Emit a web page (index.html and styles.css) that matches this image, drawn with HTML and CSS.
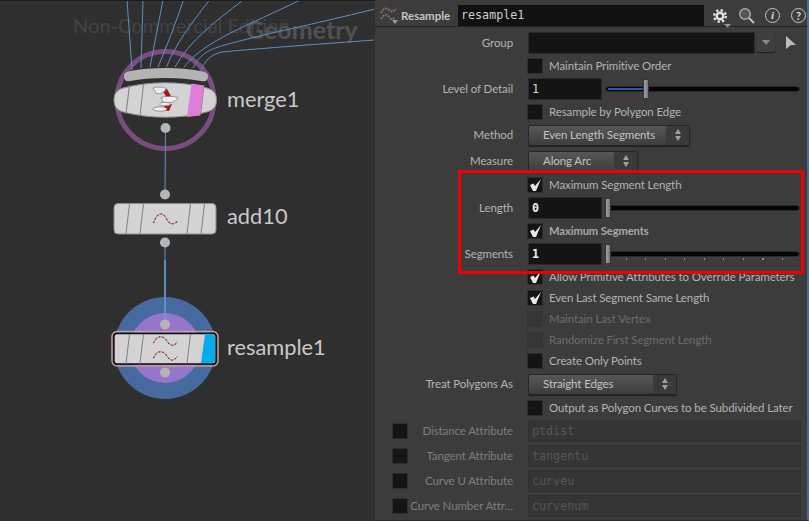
FILE: index.html
```html
<!DOCTYPE html>
<html>
<head>
    <title>Resample</title>
    <link rel="stylesheet" href="styles.css">
</head>
<body>
    <div class="network">
        <svg class="canvas" width="374" height="521" viewBox="0 0 374 521">
            <text class="watermark" x="73" y="33">Non-Commercial Edition</text>
            <text class="context" x="246" y="39">Geometry</text>

            <circle class="merge-ring" cx="165.5" cy="100" r="48.5"/>
            <g class="wire">
                <path d="M127 0 L132 70"/>
                <path d="M143 0 L141 68"/>
                <path d="M163 0 L150 67"/>
                <path d="M183.5 0 C175 25 166 48 158 67"/>
                <path d="M209.5 0 C190 25 175 45 166.500 67"/>
                <path d="M243 0 C215 22 190 40 175 67"/>
                <path d="M300 0 C250 25 205 40 184 67"/>
                <path d="M375 9 C310 25 260 35 225 45 C205 50 198 58 193 68"/>
                <path d="M375 40 C320 44 265 48 222 52 C212 54 205 60 201 70"/>
                <path d="M165.500 128 L165 194"/>
                <path d="M165 243 L165 300"/>
            </g>
            <path class="merge-input" d="M124 76 C124 73 126 72 130 71 C150 67 180 67 201 71 C205 72 208 73 208 76 C208 80 206 82 201 81 C180 77 150 77 130 81 C126 82 124 80 124 76 Z"/>
            <path class="node" d="M114 100 C114 93 117 90 123 88 C150 81 181 81 207 88 C213 90 216.500 93 216.500 100 C216.500 107 213 110 207 112 C181 119 150 119 123 112 C117 110 114 107 114 100 Z"/>
            <path class="slash" d="M129.500 85 L126 114 M143.500 84 L140 116 M204 85 L200.500 115"/>
            <path class="flag-pink" d="M191.500 83.500 L204 85.500 L200 115.500 L187 117 Z"/>
            <g class="cups">
                <path class="arrow" d="M162 90 L167 89 L171 96 L167 98 Z"/>
                <path class="arrow" d="M166 104 L172 104 L169 111 L162 110 Z"/>
                <path class="cup" d="M153 88 C156 86.500 164 87 166 88.500 C165 93 158 95 156 93 Z"/>
                <path class="cup" d="M161 97.500 C165 96 174 96 178 97.500 C176 103 166 104 163 102 Z"/>
                <ellipse class="cup" cx="160" cy="109" rx="7" ry="2.200"/>
                <ellipse class="cup" cx="165" cy="104" rx="5.500" ry="1.800"/>
            </g>
            <circle class="dot" cx="165.500" cy="128" r="5"/>
            <circle class="dot" cx="165" cy="194.500" r="5"/>

            <rect class="node" x="114" y="203.500" width="102" height="30.500" rx="4"/>
            <path class="slash" d="M129.500 204 L126 233.500 M143.500 204 L140 233.500 M190.500 204 L187 233.500 M204.500 204 L201 233.500"/>
            <path class="curve" d="M153.500 223 C157 212 163 212 166 218 C169 224 173 226 177.500 221"/>
            <path class="curve-dots" d="M153.500 223 C157 212 163 212 166 218 C169 224 173 226 177.500 221"/>
            <circle class="dot" cx="165" cy="242.500" r="5"/>

            <circle class="bypass-ring" cx="165" cy="348" r="51"/>
            <circle class="template-ring" cx="165" cy="348" r="35"/>
            <path class="wire-over" d="M165 260 L165 320"/>
            <circle class="dot" cx="165" cy="324.500" r="5"/>
            <circle class="dot" cx="165" cy="372.500" r="5"/>
            <rect class="node-halo" x="112" y="331.500" width="106" height="34.500" rx="5"/>
            <rect class="node-picked" x="114" y="333.500" width="102" height="30.500" rx="3"/>
            <path class="flag-blue" d="M205 334.500 L213 334.500 Q215 334.500 215 337 L215 361 Q215 363 213 363 L201 363 Z"/>
            <path class="slash" d="M129.500 334 L126 363.500 M143.500 334 L140 363.500 M190.500 334 L187 363.500"/>
            <path class="curve" d="M153.500 343 C157 335 163 335 167 341 C170 346 174 347 177.500 342"/>
            <path class="curve-dots" d="M153.500 343 C157 335 163 335 167 341 C170 346 174 347 177.500 342"/>
            <path class="curve" d="M153.500 358 C157 350 163 350 167 356 C170 361 174 362 177.500 356"/>
            <path class="curve-dots" d="M153.500 358 C157 350 163 350 167 356 C170 361 174 362 177.500 356"/>

            <text class="node-name" x="227" y="107">merge1</text>
            <text class="node-name" x="227" y="224">add10</text>
            <text class="node-name" x="227" y="355">resample1</text>
        </svg>
    </div>

    <div class="panel">
        <div class="header">
            <svg class="type-icon" width="18" height="18" viewBox="0 0 18 18">
                <path class="curve-thick" d="M1 7 C4 1 7 2 9 4 C11 6 13 6 16 3"/>
                <path class="curve-thick" d="M1 13 C4 8 7 8 9 11 C11 14 13 14 15 11"/>
                <path class="tiny-arrow" d="M12 14 L18 14 L15 18 Z"/>
            </svg>
            <span class="type-name">Resample</span>
            <div class="name-field">resample1</div>
            <div class="tools">
                <svg class="tool-gear" width="20" height="20" viewBox="0 0 20 20">
                    <circle class="gear-teeth" cx="8" cy="8" r="5.800"/>
                    <circle class="gear-body" cx="8" cy="8" r="3.300"/>
                    <path class="tiny-arrow" d="M12 16 L19 16 L15.500 19.500 Z"/>
                </svg>
                <svg class="tool-lens" width="17" height="17" viewBox="0 0 17 17">
                    <circle class="lens-glass" cx="7" cy="7" r="5.300"/>
                    <path class="lens-handle" d="M11 11 L16 16"/>
                </svg>
                <div class="tool-round tool-info">i</div>
                <div class="tool-round tool-help">?</div>
            </div>
        </div>

        <div class="params">
            <div class="row first">
                <div class="label">Group</div>
                <div class="field group-field"></div>
                <div class="drop-btn"><span class="drop-arrow"></span></div>
                <svg class="pick-arrow" width="12" height="15" viewBox="0 0 12 15"><path d="M1 1 L11 10 L6 10 L1 14 Z"/></svg>
            </div>
            <div class="row">
                <div class="label"></div>
                <div class="check"></div>
                <span class="check-text">Maintain Primitive Order</span>
            </div>
            <div class="row">
                <div class="label">Level of Detail</div>
                <div class="field num">1</div>
                <div class="slider">
                    <div class="slider-fill"></div>
                    <div class="slider-handle lod"></div>
                </div>
            </div>
            <div class="row">
                <div class="label"></div>
                <div class="check"></div>
                <span class="check-text">Resample by Polygon Edge</span>
            </div>
            <div class="row">
                <div class="label">Method</div>
                <div class="menu method"><span>Even Length Segments</span><div class="spin"><i class="up"></i><i class="down"></i></div></div>
            </div>
            <div class="row gap-6">
                <div class="label">Measure</div>
                <div class="menu measure"><span>Along Arc</span><div class="spin"><i class="up"></i><i class="down"></i></div></div>
            </div>
            <div class="row gap-4">
                <div class="label"></div>
                <div class="check"><svg width="14" height="14" viewBox="0 0 14 14"><path class="tick" d="M2 7 L5.500 5.500 L7 8 L13 1 L8 13 L5 13 Z"/></svg></div>
                <span class="check-text">Maximum Segment Length</span>
            </div>
            <div class="row">
                <div class="label">Length</div>
                <div class="field num strong">0</div>
                <div class="slider">
                    <div class="slider-handle"></div>
                </div>
            </div>
            <div class="row">
                <div class="label"></div>
                <div class="check"><svg width="14" height="14" viewBox="0 0 14 14"><path class="tick" d="M2 7 L5.500 5.500 L7 8 L13 1 L8 13 L5 13 Z"/></svg></div>
                <span class="check-text changed">Maximum Segments</span>
            </div>
            <div class="row">
                <div class="label">Segments</div>
                <div class="field num strong">1</div>
                <div class="slider ticks">
                    <div class="slider-handle"></div>
                </div>
            </div>
            <div class="row">
                <div class="label"></div>
                <div class="check"><svg width="14" height="14" viewBox="0 0 14 14"><path class="tick" d="M2 7 L5.500 5.500 L7 8 L13 1 L8 13 L5 13 Z"/></svg></div>
                <span class="check-text">Allow Primitive Attributes to Override Parameters</span>
            </div>
            <div class="row gap-1">
                <div class="label"></div>
                <div class="check"><svg width="14" height="14" viewBox="0 0 14 14"><path class="tick" d="M2 7 L5.500 5.500 L7 8 L13 1 L8 13 L5 13 Z"/></svg></div>
                <span class="check-text">Even Last Segment Same Length</span>
            </div>
            <div class="row gap-1">
                <div class="label"></div>
                <div class="check off"></div>
                <span class="check-text dim">Maintain Last Vertex</span>
            </div>
            <div class="row gap-1">
                <div class="label"></div>
                <div class="check off"></div>
                <span class="check-text dim">Randomize First Segment Length</span>
            </div>
            <div class="row gap-1">
                <div class="label"></div>
                <div class="check"></div>
                <span class="check-text">Create Only Points</span>
            </div>
            <div class="row">
                <div class="label">Treat Polygons As</div>
                <div class="menu treat"><span>Straight Edges</span><div class="spin"><i class="up"></i><i class="down"></i></div></div>
            </div>
            <div class="row gap-4">
                <div class="label"></div>
                <div class="check"></div>
                <span class="check-text">Output as Polygon Curves to be Subdivided Later</span>
            </div>
            <div class="row">
                <div class="label dim"><div class="check"></div>Distance Attribute</div>
                <div class="field attr">ptdist</div>
            </div>
            <div class="row gap-5">
                <div class="label dim"><div class="check"></div>Tangent Attribute</div>
                <div class="field attr">tangentu</div>
            </div>
            <div class="row gap-5">
                <div class="label dim"><div class="check"></div>Curve U Attribute</div>
                <div class="field attr">curveu</div>
            </div>
            <div class="row gap-5">
                <div class="label dim"><div class="check"></div>Curve Number Attr…</div>
                <div class="field attr">curvenum</div>
            </div>
        </div>

        <div class="highlight"></div>
    </div>
</body>
</html>
```

FILE: styles.css
```css
html, body {
    margin: 0;
    padding: 0;
    height: 100%;
    overflow: hidden;
}

body {
    display: flex;
    width: 809px;
    height: 521px;
    background-color: #2f2f2f;
    font-family: Lato, Arial, sans-serif;
    font-size: 11.500px;
    letter-spacing: -0.1px;
    color: #b4b4b4;
}

/* network editor */
.network {
    width: 375px;
    flex-shrink: 0;
    border-top: 1px solid #1c1c1c;
    box-sizing: border-box;
    overflow: hidden;
}

.canvas {
    display: block;
    margin-top: -1px;
}

.watermark {
    font-size: 20.100px;
    letter-spacing: 0;
    fill: #434343;
}

.context {
    font-size: 25px;
    font-weight: 700;
    letter-spacing: 0;
    fill: #515151;
}

.node-name {
    font-size: 21.800px;
    letter-spacing: 0;
    fill: #c9c9c9;
}

.wire path {
    fill: none;
    stroke: #5d8fc8;
    stroke-width: 1;
}

.wire-over {
    fill: none;
    stroke: #6c98d2;
    stroke-width: 1.500;
}

.merge-ring {
    fill: none;
    stroke: #7a4c7f;
    stroke-width: 5;
}

.merge-input {
    fill: #b3b3b3;
}

.node {
    fill: #d3d3d3;
    stroke: #8c8c8c;
    stroke-width: 1;
}

.slash {
    fill: none;
    stroke: #808080;
    stroke-width: 1;
}

.flag-pink {
    fill: #e07ed9;
}

.flag-blue {
    fill: #00aeef;
}

.cup {
    fill: #eeeeee;
    stroke: #777;
    stroke-width: 0.700;
}

.arrow {
    fill: #b01414;
}

.dot {
    fill: #b5b5b5;
}

.bypass-ring {
    fill: #466a9f;
}

.template-ring {
    fill: #9676cc;
}

.node-halo {
    fill: none;
    stroke: #c79c9c;
    stroke-width: 1.500;
}

.node-picked {
    fill: #d3d3d3;
    stroke: #0c0c0c;
    stroke-width: 1.300;
}

.curve {
    fill: none;
    stroke: #b86a6a;
    stroke-width: 1;
}

.curve-dots {
    fill: none;
    stroke: #3a3030;
    stroke-width: 1.200;
    stroke-dasharray: 1 3;
}

/* parameter panel */
.panel {
    position: relative;
    flex: 1;
    background-color: #3c3c3c;
    box-sizing: border-box;
    border-bottom: 1px solid #2a2a2a;
    border-right: 2px solid #3f6e8f;
}

.header {
    display: flex;
    align-items: center;
    height: 27px;
    box-sizing: border-box;
    padding: 4px 0 0 5px;
    border-bottom: 1px solid #232323;
}

.type-icon {
    flex-shrink: 0;
}

.curve-thick {
    fill: none;
    stroke: #8f6a6a;
    stroke-width: 1.800;
    stroke-dasharray: 2 1;
}

.tiny-arrow {
    fill: #9a9a9a;
}

.type-name {
    width: 57px;
    margin-left: 3px;
    font-size: 11.500px;
    font-weight: 700;
    letter-spacing: 0;
    color: #c4c4c4;
}

.name-field {
    width: 246px;
    height: 21px;
    line-height: 21px;
    box-sizing: border-box;
    padding-left: 3px;
    background-color: #111;
    font-family: "DejaVu Sans Mono", monospace;
    font-size: 11.700px;
    letter-spacing: 0;
    color: #d0d0d0;
}

.tools {
    display: flex;
    align-items: center;
    margin-left: 8px;
    gap: 6px;
}

.tool-gear {
    margin-top: 5px;
}

.gear-teeth {
    fill: none;
    stroke: #e2e2e2;
    stroke-width: 2.400;
    stroke-dasharray: 2.300 2.250;
}

.gear-body {
    fill: #3c3c3c;
    stroke: #e2e2e2;
    stroke-width: 2.400;
}

.lens-glass {
    fill: #555;
    stroke: #a8a8a8;
    stroke-width: 1.500;
}

.lens-handle {
    fill: none;
    stroke: #c0c0c0;
    stroke-width: 2;
}

.tool-round {
    width: 13px;
    height: 13px;
    margin-left: 4px;
    border: 1px solid #c6c6c6;
    border-radius: 50%;
    text-align: center;
    line-height: 13px;
    font-size: 11px;
    color: #dcdcdc;
}

.tool-info {
    font-family: "Liberation Serif", serif;
    font-style: italic;
    font-weight: 700;
}

.tool-help {
    margin-left: 5px;
    font-weight: 700;
}

.params {
    padding-top: 6px;
}

.row {
    display: flex;
    align-items: center;
    height: 20px;
    margin-top: 3px;
    padding-left: 18px;
}

.row.first {
    margin-top: 0;
}

.row.gap-1 {
    margin-top: 1px;
}

.row.gap-4 {
    margin-top: 4px;
}

.row.gap-5 {
    margin-top: 5px;
}

.row.gap-6 {
    margin-top: 6px;
}

.label {
    display: flex;
    justify-content: flex-end;
    align-items: center;
    width: 120px;
    margin-right: 15px;
    padding-bottom: 2px;
    flex-shrink: 0;
    white-space: nowrap;
}

.label .check {
    margin-top: 2px;
    margin-right: auto;
}

.label.dim {
    color: #7e7e7e;
}

.check {
    width: 14px;
    height: 14px;
    flex-shrink: 0;
    box-sizing: border-box;
    background-color: #141414;
    outline: 1px solid #2e2e2e;
}

.check svg {
    display: block;
}

.check.off {
    background-color: #363636;
    outline-color: #343434;
}

.tick {
    fill: #e8e8e8;
}

.check-text {
    margin-left: 7px;
    padding-bottom: 2px;
    white-space: nowrap;
}

.check-text.dim {
    color: #6c6c6c;
}

.check-text.changed {
    font-weight: 700;
    font-size: 11.200px;
    color: #a8a8a8;
}

.field {
    height: 22px;
    line-height: 22px;
    box-sizing: border-box;
    background-color: #141414;
    outline: 1px solid #2b2b2b;
    outline-offset: -1px;
    font-family: "DejaVu Sans Mono", monospace;
    font-size: 11.700px;
    letter-spacing: 0;
    color: #d8d8d8;
}

.group-field {
    width: 227px;
}

.num {
    width: 74px;
    padding-left: 4px;
}

.num.strong {
    font-weight: 700;
    color: #f0f0f0;
}

.attr {
    width: 273px;
    padding-left: 4px;
    background-color: #353535;
    outline-color: #313131;
    color: #555;
}

.drop-btn {
    display: flex;
    justify-content: center;
    align-items: center;
    width: 18px;
    height: 19px;
    margin: -1px 0 0 2px;
    background-color: #3f3f3f;
    border-radius: 2px;
    box-shadow: 0 1px 1px #1c1c1c;
}

.drop-arrow {
    width: 0;
    height: 0;
    border-left: 4px solid transparent;
    border-right: 4px solid transparent;
    border-top: 5px solid #8a8a8a;
}

.pick-arrow {
    margin: -1px 0 0 10px;
}

.pick-arrow path {
    fill: #bdbdbd;
}

.slider {
    position: relative;
    width: 193px;
    height: 4px;
    margin-left: 4px;
    background-color: #050505;
    border-radius: 2px;
    outline: 1px solid #2a2a2a;
}

.slider.ticks::after {
    content: "";
    position: absolute;
    left: 20px;
    right: 0;
    top: 6px;
    height: 2px;
    background-image: repeating-linear-gradient(to right, #8c8c8c 0, #8c8c8c 1px, transparent 1px, transparent 19.500px);
}

.slider-fill {
    position: absolute;
    left: 2px;
    top: 1px;
    width: 36px;
    height: 2px;
    background-color: #1f5fa8;
}

.slider-handle {
    position: absolute;
    left: -1px;
    top: -8px;
    width: 6px;
    height: 20px;
    box-sizing: border-box;
    background-image: linear-gradient(to right, #a0a0a0, #777);
    border: 1px solid #333;
    border-radius: 1px;
    z-index: 1;
}

.slider-handle.lod {
    left: 37px;
}

.menu {
    display: flex;
    justify-content: space-between;
    align-items: center;
    height: 21px;
    box-sizing: border-box;
    padding-left: 14px;
    background-image: linear-gradient(#575757, #3d3d3d);
    border: 1px solid #262626;
    border-radius: 2px;
    box-shadow: 0 1px 1px #1e1e1e;
    color: #c2c2c2;
    white-space: nowrap;
}

.menu span {
    padding-bottom: 2px;
}

.method {
    width: 162px;
}

.measure {
    width: 110px;
}

.treat {
    width: 149px;
}

.spin {
    display: flex;
    flex-direction: column;
    justify-content: center;
    align-items: center;
    gap: 2px;
    width: 23px;
    height: 100%;
    background-color: #3a3a3a;
}

.spin i {
    width: 0;
    height: 0;
    border-left: 3.500px solid transparent;
    border-right: 3.500px solid transparent;
}

.spin .up {
    border-bottom: 5px solid #a0a0a0;
}

.spin .down {
    border-top: 5px solid #a0a0a0;
}

/* red box drawn over the screenshot */
.highlight {
    position: absolute;
    left: 83px;
    top: 170px;
    width: 346px;
    height: 104px;
    box-sizing: border-box;
    border: 3px solid #f00000;
}
```
